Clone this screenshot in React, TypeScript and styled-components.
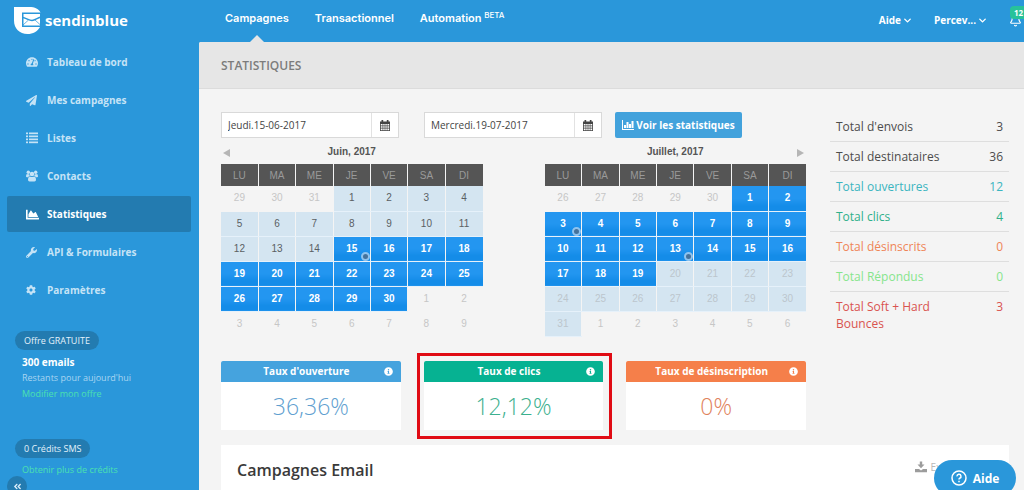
import React from "react";
import styled, { createGlobalStyle, css } from "styled-components";
import {
  FaTachometerAlt,
  FaPaperPlane,
  FaChartArea,
  FaWrench,
  FaCog,
  FaInfoCircle,
  FaAngleDoubleLeft,
} from "react-icons/fa";
import { Bell, ChevronDown } from "lucide-react";

const blue = "#2a97da";
const deepBlue = "#237bb0";

const GlobalStyle = createGlobalStyle`
  *, *::before, *::after { box-sizing: border-box; }
  body {
    margin: 0;
    background: #fff;
    font-family: "Open Sans", "Liberation Sans", sans-serif;
    font-size: 10px;
    color: #444;
    overflow: hidden;
  }
  button, input { font: inherit; color: inherit; }
  a { color: inherit; text-decoration: none; }
  h1, h2, h3, p, ul { margin: 0; padding: 0; }
`;

const Shell = styled.div`
  position: relative;
  display: grid;
  grid-template-columns: 199px minmax(0, 1fr);
  height: calc(100vh - 4px);
  overflow: hidden;
  background: ${blue};
`;

/* ---------- sidebar ---------- */

const Sidebar = styled.aside`
  position: relative;
  display: flex;
  flex-direction: column;
  min-height: 0;
`;

const Brand = styled.a`
  display: flex;
  align-items: center;
  gap: 4px;
  height: 40px;
  padding-left: 14px;
  color: #fff;
  font-size: 15px;
  font-weight: 700;
`;

const Menu = styled.ul`
  display: flex;
  flex-direction: column;
  gap: 2px;
  padding: 4px 8px 0 7px;
  list-style: none;
`;

const MenuLink = styled.a<{ $active?: boolean }>`
  display: grid;
  grid-template-columns: 21px 1fr;
  align-items: center;
  height: 36px;
  padding-left: 19px;
  border-radius: 2px;
  font-weight: 700;
  color: ${(p) => (p.$active ? "#fff" : "#c5e3f6")};
  background: ${(p) => (p.$active ? deepBlue : "transparent")};
  svg { display: block; }
`;

const Plan = styled.section<{ $top: number }>`
  display: flex;
  flex-direction: column;
  align-items: flex-start;
  margin-top: ${(p) => p.$top}px;
  padding-left: 15px;
`;

const Pill = styled.h3`
  height: 19px;
  padding: 0 9px;
  margin-bottom: 4px;
  border-radius: 10px;
  background: ${deepBlue};
  color: #e4f2fb;
  font-size: 9px;
  font-weight: 400;
  line-height: 19px;
`;

const PlanText = styled.p<{ $strong?: boolean }>`
  padding-left: 7px;
  font-size: ${(p) => (p.$strong ? 10 : 9)}px;
  font-weight: ${(p) => (p.$strong ? 700 : 400)};
  line-height: 16px;
  color: ${(p) => (p.$strong ? "#fff" : "#a9d5f1")};
`;

const PlanLink = styled.a`
  padding-left: 7px;
  font-size: 9px;
  line-height: 16px;
  color: #4be0b0;
`;

const Collapse = styled.button`
  position: absolute;
  left: 7px;
  bottom: -6px;
  display: grid;
  place-items: center;
  width: 20px;
  height: 20px;
  padding: 0;
  border: 0;
  border-radius: 50%;
  background: ${deepBlue};
  color: #d8ecf9;
`;

/* ---------- top bar ---------- */

const Column = styled.div`
  display: flex;
  flex-direction: column;
  min-width: 0;
`;

const TopBar = styled.header`
  display: flex;
  justify-content: space-between;
  height: 42px;
  padding: 0 2px 0 26px;
  color: #fff;
`;

const Tabs = styled.nav`
  display: flex;
  gap: 26px;
  font-family: Inter, "Open Sans", sans-serif;
  font-size: 11px;
  font-weight: 600;
  line-height: 37px;
`;

const Tab = styled.a<{ $active?: boolean }>`
  position: relative;
  sup {
    font-size: 8px;
    font-weight: 500;
    line-height: 0;
    vertical-align: 4px;
  }
  ${(p) =>
    p.$active &&
    css`
      &::after {
        content: "";
        position: absolute;
        bottom: 0;
        left: 50%;
        margin-left: -7px;
        border: 7px solid transparent;
        border-top: 0;
        border-bottom-color: #e6e6e6;
      }
    `}
`;

const Account = styled.div`
  display: flex;
  gap: 21px;
  height: 40px;
`;

const AccountButton = styled.button`
  position: relative;
  display: flex;
  align-items: center;
  gap: 1px;
  padding: 0;
  border: 0;
  background: none;
  font-weight: 700;
  white-space: nowrap;
`;

const Count = styled.span`
  position: absolute;
  top: 6px;
  left: 1px;
  width: 22px;
  padding-left: 4px;
  border-radius: 4px;
  background: #27c29a;
  font-size: 8px;
  line-height: 13px;
  text-align: left;
`;

/* ---------- page ---------- */

const Page = styled.main`
  flex: 1;
  min-height: 0;
  display: flex;
  flex-direction: column;
  background: #f4f4f4;
  border-top-left-radius: 2px;
`;

const PageTitle = styled.h1`
  flex: none;
  height: 47px;
  padding-left: 22px;
  border-bottom: 1px solid #dcdcdc;
  border-top-left-radius: 2px;
  background: #e6e6e6;
  color: #7c7c7c;
  font-size: 12px;
  font-weight: 600;
  line-height: 47px;
`;

const Content = styled.div`
  display: grid;
  grid-template-columns: minmax(0, 1fr) 179px;
  column-gap: 24px;
  padding: 23px 15px 0 22px;
`;

const Filters = styled.form`
  display: flex;
  gap: 13px;
  height: 26px;
`;

const Fields = styled.div`
  display: flex;
  gap: 25px;
`;

const Field = styled.div`
  display: flex;
  width: 178px;
  border: 1px solid #d9d9d9;
  background: #fff;
`;

const DateInput = styled.input`
  flex: 1;
  min-width: 0;
  padding: 0 6px;
  border: 0;
  outline: 0;
  background: transparent;
`;

const FieldButton = styled.button`
  display: grid;
  place-items: center;
  width: 27px;
  padding: 0;
  border: 0;
  border-left: 1px solid #e2e2e2;
  background: transparent;
`;

const Submit = styled.button`
  display: flex;
  align-items: center;
  justify-content: center;
  gap: 2px;
  width: 127px;
  padding: 0;
  border: 0;
  border-radius: 2px;
  background: #42a2dc;
  color: #fff;
  font-weight: 700;
  white-space: nowrap;
`;

const Calendars = styled.div`
  display: grid;
  grid-template-columns: 1fr 1fr;
  gap: 62px;
  font-family: "Liberation Sans", Arial, sans-serif;
`;

const MonthHead = styled.div`
  display: flex;
  align-items: center;
  height: 26px;
  padding: 0 2px;
`;

const MonthName = styled.h2`
  flex: 1;
  color: #555;
  font-size: 10px;
  font-weight: 700;
  text-align: center;
`;

const Step = styled.button<{ $dir?: "prev" | "next" }>`
  width: 7px;
  height: 8px;
  padding: 0;
  margin: 4px 0 0;
  border: solid transparent;
  border-width: 4px 0;
  background: none;
  ${(p) => p.$dir === "prev" && "margin-right: -7px; border-right: 7px solid #b5b5b5;"}
  ${(p) => p.$dir === "next" && "margin-left: -7px; border-left: 7px solid #b5b5b5;"}
`;

const MonthTable = styled.table`
  width: 100%;
  table-layout: fixed;
  border-collapse: collapse;
  font-size: 10px;
`;

const WeekDay = styled.th`
  height: 22px;
  padding: 0;
  background: #555;
  color: #9a9a9a;
  font-weight: 400;
  & + & { border-left: 1px solid #f4f4f4; }
`;

type DayKind = "out" | "free" | "picked" | "future";

const dayLook = {
  out: css`color: #c6c6c6;`,
  free: css`background: #d4e5f1; color: #5a5f63;`,
  future: css`background: #d4e5f1; color: #bcc6cd;`,
  picked: css`background: linear-gradient(#2396f0 50%, #148ce8 80%); color: #fff; font-weight: 700;`,
};

const Day = styled.td<{ $kind: DayKind }>`
  height: 25px;
  padding: 0;
  text-align: center;
  border-bottom: 1px solid ${(p) => (p.$kind === "out" ? "#f4f4f4" : "#e6f1fa")};
  background-clip: padding-box;
  & + & { border-left: 1px solid #f4f4f4; }
  ${(p) => dayLook[p.$kind]}
`;

const DayBox = styled.div`
  position: relative;
  line-height: 24px;
`;

const Dot = styled.i`
  position: absolute;
  right: 0;
  bottom: 0;
  width: 9px;
  height: 9px;
  border: 2px solid #8fc3ee;
  border-radius: 50%;
  background: #45729b;
`;

const Totals = styled.table`
  width: 100%;
  border-collapse: collapse;
  align-self: start;
  font-size: 12px;
  line-height: 17px;
`;

const TotalRow = styled.tr<{ $color: string }>`
  color: ${(p) => p.$color};
  & + & { border-top: 1px solid #dedede; }
  th, td {
    padding: 6px;
    font-weight: 400;
    vertical-align: top;
  }
  th { width: 120px; text-align: left; }
  td { text-align: right; }
`;

const Rates = styled.div`
  display: grid;
  grid-template-columns: repeat(3, 1fr);
  gap: 23px;
  margin-top: 24px;
`;

const RateCard = styled.article<{ $color: string }>`
  position: relative;
  background: #fff;
  color: ${(p) => p.$color};
`;

const RateHead = styled.header<{ $color: string }>`
  display: flex;
  align-items: center;
  height: 21px;
  padding: 0 8px;
  border-radius: 2px 2px 0 0;
  background: ${(p) => p.$color};
  color: #fff;
`;

const RateTitle = styled.h2`
  flex: 1;
  font-size: 10px;
  font-weight: 700;
  text-align: center;
`;

const RateValue = styled.p`
  font-size: 23px;
  font-weight: 300;
  line-height: 48px;
  text-align: center;
`;

const Highlight = styled.span`
  position: absolute;
  inset: -8px -9px -9px -7px;
  border: 3px solid #e00b14;
  pointer-events: none;
`;

const Panel = styled.section`
  flex: 1;
  display: flex;
  align-items: flex-start;
  justify-content: space-between;
  margin: 15px 15px 0 22px;
  padding: 13px 48px 0 16px;
  background: #fff;
`;

const PanelTitle = styled.h2`
  color: #3a3a3a;
  font-size: 16px;
  font-weight: 600;
  line-height: 24px;
`;

const Export = styled.button`
  display: flex;
  align-items: center;
  gap: 3px;
  padding: 0;
  border: 0;
  background: none;
  color: #b8b8b8;
  line-height: 18px;
`;

const Help = styled.button`
  position: absolute;
  right: 8px;
  bottom: -6px;
  display: flex;
  align-items: center;
  justify-content: center;
  gap: 6px;
  width: 82px;
  height: 36px;
  padding: 0;
  border: 0;
  border-radius: 18px;
  background: ${blue};
  color: #fff;
  font-size: 12px;
  font-weight: 700;
`;

/* ---------- drawings ---------- */

const Logo = () => (
  <svg width="27" height="27" viewBox="0 0 27 27" aria-hidden="true">
    <path d="M0 0H15C21 0 25 2 26.500 5.500H8V20H26C23.500 24.500 19 27 13.500 27C5.500 27 0 21.500 0 13.500Z" fill="#fff" />
    <path d="M9.500 7H26V18.500H9.500Z" fill="#fff" />
    <path d="M9 10.500C13 11.500 15 13.500 18 13.500C21 13.500 23 11 27 10" fill="none" stroke={blue} strokeWidth="1.500" />
    <path d="M9 18L14.500 13M26.500 18L21 13" stroke={blue} strokeWidth="0.700" />
  </svg>
);

const ListIcon = () => (
  <svg width="12" height="12" viewBox="0 0 12 12" fill="currentColor" aria-hidden="true">
    {[1, 4, 7, 10].map((y) => (
      <g key={y}>
        <rect x="0" y={y - 0.500} width="2" height="1.700" />
        <rect x="3" y={y - 0.500} width="9" height="1.700" />
      </g>
    ))}
  </svg>
);

const PeopleIcon = () => (
  <svg width="12" height="12" viewBox="0 0 12 12" fill="currentColor" aria-hidden="true">
    <circle cx="2.300" cy="2.200" r="1.700" />
    <circle cx="9.700" cy="2.200" r="1.700" />
    <circle cx="6" cy="4" r="2.300" />
    <path d="M0 6.500Q0 4 1 4Q2 4.600 3.200 4.200Q3.400 5.300 3.900 6Q2.700 6.100 2.200 7.200H1Q0 7.200 0 6.500ZM12 6.500Q12 4 11 4Q10 4.600 8.800 4.200Q8.600 5.300 8.100 6Q9.300 6.100 9.800 7.200H11Q12 7.200 12 6.500Z" />
    <path d="M2 9.800Q2 6.500 4 6.400Q6 7.800 8 6.400Q10 6.500 10 9.800Q10 11.400 8.500 11.400H3.500Q2 11.400 2 9.800Z" />
  </svg>
);

const BarsIcon = () => (
  <svg width="12" height="10" viewBox="0 0 12 10" fill="currentColor" aria-hidden="true">
    <path d="M0 0H1V9H12V10H0ZM2 5H4V8H2ZM4.500 2H6.500V8H4.500ZM7 4H9V8H7ZM9.500 1H11.500V8H9.500Z" />
  </svg>
);

const CalendarIcon = () => (
  <svg width="10" height="11" viewBox="0 0 10 11" fill="#444" aria-hidden="true">
    <path
      fillRule="evenodd"
      d="M0 1.500H1.500V0H3.200V1.500H6.800V0H8.500V1.500H10V11H0ZM.8 4V5.500H2.600V4ZM3.200 4V5.500H4.700V4ZM5.300 4V5.500H6.800V4ZM7.400 4V5.500H9.200V4ZM.8 6.200V7.800H2.600V6.200ZM3.200 6.200V7.800H4.700V6.200ZM5.300 6.200V7.800H6.800V6.200ZM7.400 6.200V7.800H9.200V6.200ZM.8 8.500V10.200H2.600V8.500ZM3.200 8.500V10.200H4.700V8.500ZM5.300 8.500V10.200H6.800V8.500ZM7.400 8.500V10.200H9.200V8.500Z"
    />
  </svg>
);

const ExportIcon = () => (
  <svg width="12" height="12" viewBox="0 0 12 12" fill="#9c9c9c" aria-hidden="true">
    <path d="M4.800 0.500H7.200V3.500H9.500L6 7.200L2.500 3.500H4.800Z" />
    <path d="M0 8H4L6 9.500L8 8H12V11.200H0Z" />
  </svg>
);

const HelpIcon = () => (
  <svg width="16" height="16" viewBox="0 0 16 16" fill="none" stroke="#fff" strokeWidth="1.500" aria-hidden="true">
    <circle cx="8" cy="8" r="7" />
    <path d="M6 6.400A2 2 0 1 1 8.700 8.200Q8 8.500 8 9.500" />
    <path d="M8 10.700V12.200" />
  </svg>
);

/* ---------- data ---------- */

const menu = [
  { label: "Tableau de bord", icon: <FaTachometerAlt size={12} /> },
  { label: "Mes campagnes", icon: <FaPaperPlane size={11} /> },
  { label: "Listes", icon: <ListIcon /> },
  { label: "Contacts", icon: <PeopleIcon /> },
  { label: "Statistiques", icon: <FaChartArea size={13} />, active: true },
  { label: "API & Formulaires", icon: <FaWrench size={11} /> },
  { label: "Paramètres", icon: <FaCog size={10} /> },
];

const weekDays = ["LU", "MA", "ME", "JE", "VE", "SA", "DI"];

interface MonthData {
  name: string;
  before: number[];
  length: number;
  picked: [number, number];
  marked: number[];
}

const june: MonthData = { name: "Juin, 2017", before: [29, 30, 31], length: 30, picked: [15, 30], marked: [15] };
const july: MonthData = { name: "Juillet, 2017", before: [26, 27, 28, 29, 30], length: 31, picked: [1, 19], marked: [3, 13] };

const weeksOf = (m: MonthData) => {
  const days: { n: number; kind: DayKind; marked?: boolean }[] = m.before.map((n) => ({ n, kind: "out" }));
  for (let n = 1; n <= m.length; n++) {
    const kind = n < m.picked[0] ? "free" : n <= m.picked[1] ? "picked" : "future";
    days.push({ n, kind, marked: m.marked.includes(n) });
  }
  for (let n = 1; days.length < 42; n++) days.push({ n, kind: "out" });
  return Array.from({ length: 6 }, (_, w) => days.slice(w * 7, w * 7 + 7));
};

const totals = [
  { label: "Total d'envois", value: 3, color: "#4c4c4c" },
  { label: "Total destinataires", value: 36, color: "#4c4c4c" },
  { label: "Total ouvertures", value: 12, color: "#3bb5c0" },
  { label: "Total clics", value: 4, color: "#2fb08a" },
  { label: "Total désinscrits", value: 0, color: "#ef8557" },
  { label: "Total Répondus", value: 0, color: "#86e58c" },
  { label: "Total Soft + Hard Bounces", value: 3, color: "#d9534f" },
];

const rates = [
  { label: "Taux d'ouverture", value: "36,36%", head: "#45a3de", text: "#5f9fd0" },
  { label: "Taux de clics", value: "12,12%", head: "#06b292", text: "#3cb08e", highlighted: true },
  { label: "Taux de désinscription", value: "0%", head: "#f57f4a", text: "#e0825c" },
];

const Month = ({ data, step }: { data: MonthData; step: "prev" | "next" }) => (
  <section>
    <MonthHead>
      {step === "prev" && <Step type="button" $dir="prev" aria-label="Mois précédent" />}
      <MonthName>{data.name}</MonthName>
      {step === "next" && <Step type="button" $dir="next" aria-label="Mois suivant" />}
    </MonthHead>
    <MonthTable>
      <thead>
        <tr>
          {weekDays.map((d) => (
            <WeekDay key={d} scope="col">{d}</WeekDay>
          ))}
        </tr>
      </thead>
      <tbody>
        {weeksOf(data).map((week, i) => (
          <tr key={i}>
            {week.map((d) => (
              <Day key={d.n} $kind={d.kind}>
                <DayBox>
                  {d.n}
                  {d.marked && <Dot />}
                </DayBox>
              </Day>
            ))}
          </tr>
        ))}
      </tbody>
    </MonthTable>
  </section>
);

const DateField = ({ label, value }: { label: string; value: string }) => (
  <Field>
    <DateInput type="text" aria-label={label} defaultValue={value} />
    <FieldButton type="button" aria-label="Ouvrir le calendrier">
      <CalendarIcon />
    </FieldButton>
  </Field>
);

export default function App() {
  return (
    <>
      <GlobalStyle />
      <Shell>
        <Sidebar>
          <Brand href="#">
            <Logo />
            sendinblue
          </Brand>
          <nav>
            <Menu>
              {menu.map((m) => (
                <li key={m.label}>
                  <MenuLink href="#" $active={m.active}>
                    {m.icon}
                    {m.label}
                  </MenuLink>
                </li>
              ))}
            </Menu>
          </nav>
          <Plan $top={23}>
            <Pill>Offre GRATUITE</Pill>
            <PlanText $strong>300 emails</PlanText>
            <PlanText>Restants pour aujourd'hui</PlanText>
            <PlanLink href="#">Modifier mon offre</PlanLink>
          </Plan>
          <Plan $top={37}>
            <Pill>0 Crédits SMS</Pill>
            <PlanLink href="#">Obtenir plus de crédits</PlanLink>
          </Plan>
          <Collapse type="button" aria-label="Réduire le menu">
            <FaAngleDoubleLeft size={9} />
          </Collapse>
        </Sidebar>

        <Column>
          <TopBar>
            <Tabs>
              <Tab href="#" $active>Campagnes</Tab>
              <Tab href="#">Transactionnel</Tab>
              <Tab href="#">
                Automation <sup>BETA</sup>
              </Tab>
            </Tabs>
            <Account>
              <AccountButton type="button">
                Aide <ChevronDown size={11} strokeWidth={3} />
              </AccountButton>
              <AccountButton type="button">
                Percev... <ChevronDown size={11} strokeWidth={3} />
              </AccountButton>
              <AccountButton type="button" aria-label="Notifications">
                <Bell size={13} />
                <Count>12</Count>
              </AccountButton>
            </Account>
          </TopBar>

          <Page>
            <PageTitle>STATISTIQUES</PageTitle>
            <Content>
              <div>
                <Filters>
                  <Fields>
                    <DateField label="Date de début" value="Jeudi.15-06-2017" />
                    <DateField label="Date de fin" value="Mercredi.19-07-2017" />
                  </Fields>
                  <Submit type="button">
                    <BarsIcon />
                    Voir les statistiques
                  </Submit>
                </Filters>
                <Calendars>
                  <Month data={june} step="prev" />
                  <Month data={july} step="next" />
                </Calendars>
                <Rates>
                  {rates.map((r) => (
                    <RateCard key={r.label} $color={r.text}>
                      <RateHead $color={r.head}>
                        <RateTitle>{r.label}</RateTitle>
                        <FaInfoCircle size={9} />
                      </RateHead>
                      <RateValue>{r.value}</RateValue>
                      {r.highlighted && <Highlight />}
                    </RateCard>
                  ))}
                </Rates>
              </div>
              <Totals>
                <tbody>
                  {totals.map((t) => (
                    <TotalRow key={t.label} $color={t.color}>
                      <th scope="row">{t.label}</th>
                      <td>{t.value}</td>
                    </TotalRow>
                  ))}
                </tbody>
              </Totals>
            </Content>
            <Panel>
              <PanelTitle>Campagnes Email</PanelTitle>
              <Export type="button">
                <ExportIcon />
                Export
              </Export>
            </Panel>
          </Page>
        </Column>

        <Help type="button">
          <HelpIcon />
          Aide
        </Help>
      </Shell>
    </>
  );
}
